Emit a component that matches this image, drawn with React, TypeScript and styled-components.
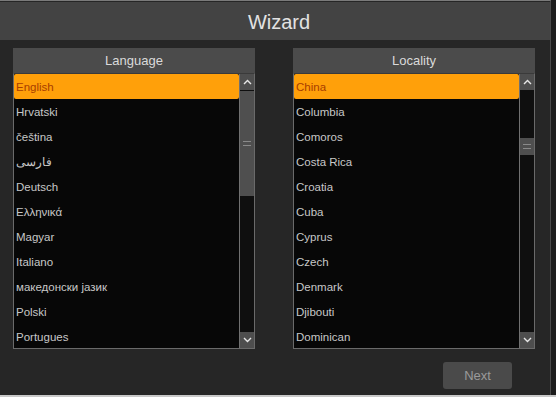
import styled, { createGlobalStyle } from "styled-components";

const GlobalStyle = createGlobalStyle`
	html, body {
		margin: 0;
		padding: 0;
		background: #1c1c1c;
		font-family: "Liberation Sans", Arial, sans-serif;
	}
`;

const languages = [
	"English",
	"Hrvatski",
	"čeština",
	"فارسی",
	"Deutsch",
	"Ελληνικά",
	"Magyar",
	"Italiano",
	"македонски јазик",
	"Polski",
	"Portugues",
];

const localities = [
	"China",
	"Columbia",
	"Comoros",
	"Costa Rica",
	"Croatia",
	"Cuba",
	"Cyprus",
	"Czech",
	"Denmark",
	"Djibouti",
	"Dominican",
];

interface ThumbProps {
	$top: number;
	$height: number;
}

function Chevron({ up }: { up?: boolean }) {
	return (
		<svg width="9" height="6" viewBox="0 0 9 6">
			<polyline
				points={up ? "1,5 4.5,1.5 8,5" : "1,1 4.5,4.5 8,1"}
				fill="none"
				stroke="#e6e6e6"
				strokeWidth="1.4"
			/>
		</svg>
	);
}

function ListPanel({
	title,
	items,
	thumbTop,
	thumbHeight,
}: {
	title: string;
	items: string[];
	thumbTop: number;
	thumbHeight: number;
}) {
	return (
		<Panel>
			<PanelHeader>{title}</PanelHeader>
			<ListBox>
				<Rows>
					{items.map((item, index) => (
						<Row key={item} $selected={index === 0}>
							{item}
						</Row>
					))}
				</Rows>
				<ScrollBar>
					<ScrollButton>
						<Chevron up />
					</ScrollButton>
					<Track>
						<Thumb $top={thumbTop} $height={thumbHeight}>
							<Grip />
						</Thumb>
					</Track>
					<ScrollButton>
						<Chevron />
					</ScrollButton>
				</ScrollBar>
			</ListBox>
		</Panel>
	);
}

function App() {
	return (
		<>
			<GlobalStyle />
			<Screen>
				<Wizard>
					<TitleBar>Wizard</TitleBar>
					<Content>
						<Panels>
							<ListPanel
								title="Language"
								items={languages}
								thumbTop={1}
								thumbHeight={105}
							/>
							<ListPanel
								title="Locality"
								items={localities}
								thumbTop={48}
								thumbHeight={17}
							/>
						</Panels>
						<Footer>
							<NextButton>Next</NextButton>
						</Footer>
					</Content>
				</Wizard>
				<BottomStrip />
			</Screen>
		</>
	);
}

const Screen = styled.div`
	width: 556px;
	height: 397px;
	display: flex;
	flex-direction: column;
	overflow: hidden;
`;

const Wizard = styled.div`
	width: 551px;
	height: 395px;
	background: #262626;
	border-right: 1px solid #4a4a4a;
	display: flex;
	flex-direction: column;
	box-sizing: border-box;
	border-top: 1px solid #7a7a7a;
`;

const TitleBar = styled.div`
	height: 38px;
	margin-top: 1px;
	background: #434343;
	color: #e2e2e2;
	font-size: 20px;
	display: flex;
	align-items: center;
	justify-content: center;
	padding: 3px 0 0 8px;
	box-sizing: border-box;
`;

const Content = styled.div`
	flex: 1;
	display: flex;
	flex-direction: column;
	padding: 8px 15px 0 13px;
`;

const Panels = styled.div`
	display: flex;
	gap: 38px;
`;

const Panel = styled.div`
	width: 242px;
	display: flex;
	flex-direction: column;
`;

const PanelHeader = styled.div`
	height: 25px;
	background: #4b4b4b;
	color: #dadada;
	font-size: 13px;
	display: flex;
	align-items: center;
	justify-content: center;
`;

const ListBox = styled.div`
	display: flex;
	background: #070707;
	border: 1px solid #6a6a6a;
	border-top-color: #3a3a3a;
	height: 276px;
	box-sizing: border-box;
`;

const Rows = styled.div`
	flex: 1;
	display: flex;
	flex-direction: column;
`;

const Row = styled.div<{ $selected: boolean }>`
	height: 25px;
	flex-shrink: 0;
	display: flex;
	align-items: center;
	padding-left: 2px;
	font-size: 11.5px;
	color: ${p => (p.$selected ? "#a83d00" : "#c8c8c8")};
	background: ${p => (p.$selected ? "#ffa00a" : "transparent")};
	border-radius: ${p => (p.$selected ? "2px" : "0")};
`;

const ScrollBar = styled.div`
	width: 14px;
	display: flex;
	flex-direction: column;
	border-left: 1px solid #707070;
	background: #111;
`;

const ScrollButton = styled.div`
	height: 16px;
	background: #4e4e4e;
	display: flex;
	align-items: center;
	justify-content: center;
`;

const Track = styled.div`
	flex: 1;
	position: relative;
	background: #0f0f0f;
`;

const Thumb = styled.div<ThumbProps>`
	position: absolute;
	left: 0;
	right: 0;
	top: ${p => p.$top}px;
	height: ${p => p.$height}px;
	background: #4f4f4f;
	display: flex;
	align-items: center;
	justify-content: center;
`;

const Grip = styled.div`
	width: 8px;
	height: 3px;
	border-top: 1px solid #8a8a8a;
	border-bottom: 1px solid #8a8a8a;
`;

const Footer = styled.div`
	display: flex;
	justify-content: flex-end;
	padding: 13px 23px 0 0;
`;

const NextButton = styled.div`
	width: 69px;
	height: 27px;
	border-radius: 3px;
	background: #4a4a4a;
	color: #9a9a9a;
	font-size: 13px;
	display: flex;
	align-items: center;
	justify-content: center;
`;

const BottomStrip = styled.div`
	height: 2px;
	background: #c8c8c8;
`;

export default App;
